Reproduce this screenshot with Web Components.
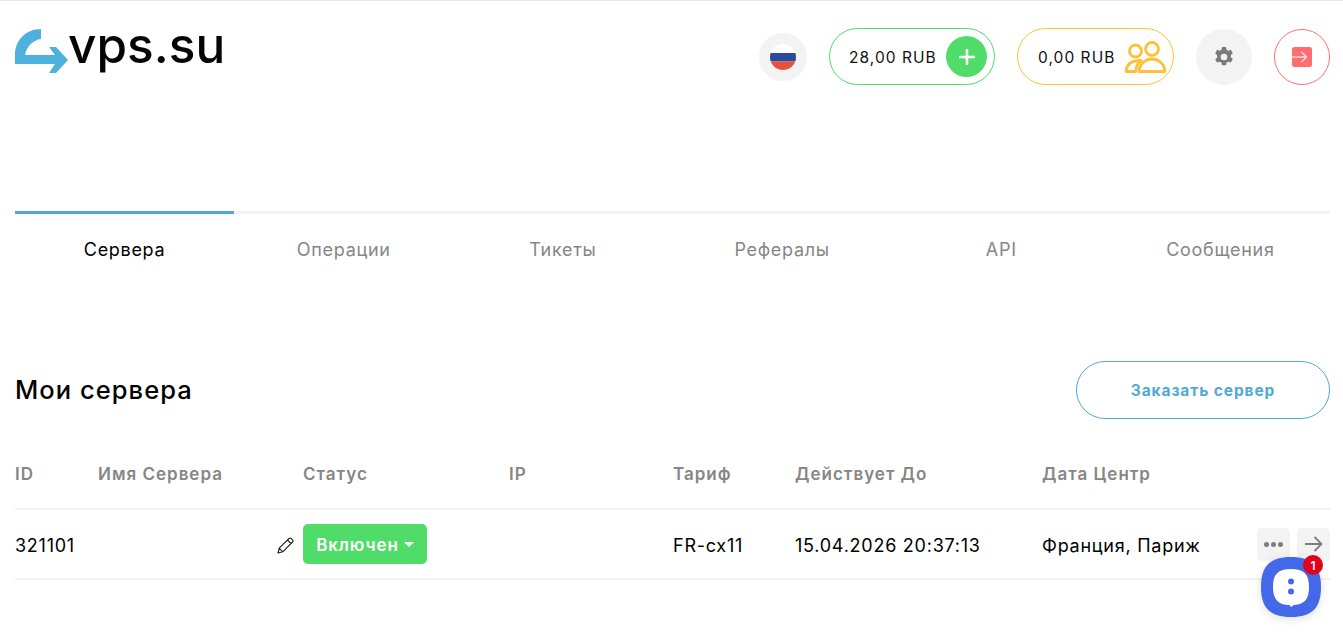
<!DOCTYPE html>
<html lang="ru">
<head>
<meta charset="utf-8">
<title>vps.su</title>
<style>
    html, body { margin: 0; padding: 0; background: #fff; }
    body { font-family: Inter, "Liberation Sans", sans-serif; color: #000; height: 637px; overflow: hidden; border-top: 1px solid #e6e6e6; box-sizing: border-box; position: relative; }
</style>
</head>
<body>
<app-header></app-header>
<app-tabs></app-tabs>
<server-list></server-list>
<chat-widget></chat-widget>

<script>
class AppHeader extends HTMLElement {
    connectedCallback() {
        this.attachShadow({ mode: 'open' });
        this.shadowRoot.innerHTML = `
            <style>
                :host { display: flex; justify-content: space-between; align-items: flex-start; padding: 0 13px 0 15px; height: 210px; box-sizing: border-box; }
                .logo { display: flex; align-items: flex-start; padding-top: 28px; height: 48px; text-decoration: none; color: #000; }
                .logo svg { width: 54px; height: 46px; flex: none; }
                .logo span { font: 500 49.500px/32px Inter, sans-serif; margin-left: -1px; letter-spacing: 0; color: #050505; }
                .right { display: flex; align-items: center; margin-top: 27px; }
                .round { width: 56px; height: 56px; border-radius: 50%; background: #f3f3f3; display: flex; align-items: center; justify-content: center; box-sizing: border-box; }
                .flag { width: 48px; height: 48px; margin-right: 22px; }
                .pill { height: 57px; border-radius: 29px; display: flex; align-items: center; box-sizing: border-box; font-size: 15.5px; letter-spacing: 1.05px; color: #111; }
                .pill span { padding-top: 2px; }
                .pill.green { width: 166px; border: 1px solid #50dc69; padding: 0 7px 0 19px; justify-content: space-between; margin-right: 22px; }
                .pill.yellow { width: 157px; border: 1px solid #fcc139; padding: 0 7px 0 20px; justify-content: space-between; margin-right: 22px; }
                .plus { width: 41px; height: 41px; border-radius: 50%; background: #50dc69; display: flex; align-items: center; justify-content: center; }
                .gear { margin-right: 22px; }
                .exit { background: #fff; border: 1px solid #ff6d70; }
            </style>
            <a class="logo" href="#">
                <svg viewBox="0 0 54 46"><path fill="#4eb0dc" d="M26 0V10C18 11 12 17 10 26H40L34 18H41L53 31 41 44H34L40 35H0V26C0 11 11 0 26 0z"/></svg>
                <span>vps.su</span>
            </a>
            <div class="right">
                <div class="round flag">
                    <svg width="26" height="26" viewBox="0 0 26 26"><clipPath id="c"><circle cx="13" cy="13" r="13"/></clipPath><g clip-path="url(#c)"><rect width="26" height="9" fill="#fff"/><rect y="9" width="26" height="8.500" fill="#2d4a9b"/><rect y="17.500" width="26" height="8.500" fill="#e8503f"/></g></svg>
                </div>
                <div class="pill green"><span>28,00 RUB</span>
                    <div class="plus"><svg width="16" height="16" viewBox="0 0 16 16"><path d="M8 1v14M1 8h14" stroke="#fff" stroke-width="2.600" stroke-linecap="round"/></svg></div>
                </div>
                <div class="pill yellow"><span>0,00 RUB</span>
                    <svg width="42" height="32" viewBox="0 0 42 32" fill="none" stroke="#fcc139" stroke-width="2.800" stroke-linejoin="round"><circle cx="11.500" cy="10" r="6"/><circle cx="28" cy="8" r="6.500"/><path d="M2 30.500C2.500 24 7 19.500 17 19.500 13.500 22 12 26 11.500 30.500z"/><path d="M15 30.500C15.500 23 21 18 28 18s12.500 5 13 12.500z"/></svg>
                </div>
                <div class="round gear">
                    <svg width="20" height="20" viewBox="0 0 24 24"><path fill="#7a7a7a" fill-rule="evenodd" d="M14.400 0l.7 3.300c.7.300 1.300.6 1.900 1.100l3.200-1 2.400 4.100-2.500 2.300c.1.800.1 1.600 0 2.400l2.500 2.300-2.400 4.100-3.200-1c-.6.500-1.200.8-1.900 1.100l-.7 3.300H9.600l-.7-3.300c-.7-.3-1.300-.6-1.900-1.100l-3.200 1L1.400 14.900l2.500-2.300c-.1-.8-.1-1.600 0-2.400L1.400 7.500l2.400-4.100 3.200 1c.6-.5 1.200-.8 1.900-1.100L9.600 0zM12 8a4 4 0 100 8 4 4 0 000-8z"/></svg>
                </div>
                <div class="round exit">
                    <svg width="20" height="20" viewBox="0 0 20 20"><rect width="20" height="20" rx="2.500" fill="#ff6d70"/><path d="M0 10h14M9.500 5l5 5-5 5" fill="none" stroke="#ffd9da" stroke-width="1.500"/></svg>
                </div>
            </div>
        `;
    }
}

class AppTabs extends HTMLElement {
    connectedCallback() {
        this.attachShadow({ mode: 'open' });
        const tabs = ['Сервера', 'Операции', 'Тикеты', 'Рефералы', 'API', 'Сообщения'];
        this.shadowRoot.innerHTML = `
            <style>
                :host { display: grid; grid-template-columns: repeat(6, 1fr); margin: 0 13px 0 15px; height: 150px; align-content: start; }
                .tab { border-top: 3px solid #f2f2f2; height: 72px; display: flex; align-items: center; justify-content: center; box-sizing: border-box; font-size: 18px; letter-spacing: .7px; color: #868686; padding-top: 2px; }
                .tab.active { border-top-color: #4fa9d6; color: #000; }
            </style>
            ${tabs.map((t, i) => `<div class="tab${i === 0 ? ' active' : ''}">${t}</div>`).join('')}
        `;
    }
}

class ServerList extends HTMLElement {
    connectedCallback() {
        this.attachShadow({ mode: 'open' });
        this.shadowRoot.innerHTML = `
            <style>
                :host { display: block; margin: 0 13px 0 15px; }
                .head { display: flex; justify-content: space-between; align-items: center; height: 58px; }
                h1 { margin: 0; font-size: 25.500px; font-weight: 500; letter-spacing: 1.05px; color: #000; position: relative; top: -1px; }
                .order { width: 254px; height: 58px; box-sizing: border-box; border: 1px solid #4fa9d6; border-radius: 29px; background: #fff; color: #4fa9d6; font: 700 15.500px Inter, sans-serif; letter-spacing: .9px; display: flex; align-items: center; justify-content: center; }
                .row { display: grid; grid-template-columns: 83px 205px 206px 164px 122px 247px 1fr 73px; align-items: center; box-sizing: border-box; border-bottom: 2px solid #f2f2f2; }
                .row.th { height: 91px; padding-top: 21px; font-size: 17px; font-weight: 600; letter-spacing: 1px; color: #868686; }
                .row.td { height: 70px; font-size: 18px; letter-spacing: .75px; color: #000; }
                .row.td > div { padding-top: 2px; }
                .status { display: flex; align-items: center; position: relative; }
                .pencil { position: absolute; left: -26px; top: 13px; width: 17px; height: 17px; }
                .btn { height: 40px; width: 124px; box-sizing: border-box; background: #50dc69; border-radius: 5px; color: #fff; font-weight: 600; font-size: 17px; letter-spacing: .9px; display: flex; align-items: center; justify-content: center; gap: 5px; padding-top: 2px; }
                .row.td .btn { margin-top: -2px; }
                .caret { width: 0; height: 0; border: 5px solid transparent; border-top-color: #fff; border-bottom: 0; margin-top: -2px; }
                .actions { display: flex; gap: 7px; justify-content: flex-end; }
                .row.td .actions { padding-top: 0; }
                .act { width: 33px; height: 33px; border-radius: 5px; background: #f3f3f3; display: flex; align-items: center; justify-content: center; }
            </style>
            <div class="head">
                <h1>Мои сервера</h1>
                <div class="order">Заказать сервер</div>
            </div>
            <div class="row th">
                <div>ID</div><div>Имя Сервера</div><div>Статус</div><div>IP</div><div>Тариф</div><div>Действует До</div><div>Дата Центр</div><div></div>
            </div>
            <div class="row td">
                <div>321101</div>
                <div></div>
                <div class="status">
                    <svg class="pencil" viewBox="0 0 17 17" fill="none" stroke="#222" stroke-width="1.100" stroke-linejoin="round"><path d="M1 16l1.200-4.800L12 1.500a1.500 1.500 0 012.100 0l1.400 1.400a1.500 1.500 0 010 2.100L5.800 14.800zM2.200 11.200l3.600 3.600M10.500 3l3.500 3.500"/></svg>
                    <div class="btn">Включен<span class="caret"></span></div>
                </div>
                <div></div>
                <div>FR-cx11</div>
                <div>15.04.2026 20:37:13</div>
                <div>Франция, Париж</div>
                <div class="actions">
                    <div class="act"><svg width="19" height="5" viewBox="0 0 19 5" fill="#7d7d7d"><circle cx="2.500" cy="2.500" r="2.500"/><circle cx="9.500" cy="2.500" r="2.500"/><circle cx="16.500" cy="2.500" r="2.500"/></svg></div>
                    <div class="act"><svg width="18" height="16" viewBox="0 0 18 16" fill="none" stroke="#7d7d7d" stroke-width="1.800"><path d="M0 8h16.500M9.500 1l7 7-7 7"/></svg></div>
                </div>
            </div>
        `;
    }
}

class ChatWidget extends HTMLElement {
    connectedCallback() {
        this.attachShadow({ mode: 'open' });
        this.shadowRoot.innerHTML = `
            <style>
                :host { position: absolute; left: 1261px; top: 556px; width: 60px; height: 60px; display: block; }
                svg { display: block; filter: drop-shadow(0 2px 4px rgba(0,0,0,.12)); }
                .badge { position: absolute; right: -2px; top: -2px; width: 20px; height: 20px; border-radius: 50%; background: #e2001a; color: #fff; font-size: 12px; font-weight: 600; display: flex; align-items: center; justify-content: center; }
            </style>
            <svg width="60" height="60" viewBox="0 0 60 60">
                <path fill="#4469e8" d="M30 0c21 0 30 9 30 30S51 60 30 60 0 51 0 30 9 0 30 0z"/>
                <path fill="#fff" d="M30 12c13 0 18 5 18 18 0 12-4 17-15 18l-3 2-1.500-2C17 48 12 42 12 30c0-13 5-18 18-18z"/>
                <circle cx="30" cy="24.500" r="3" fill="#4469e8"/>
                <circle cx="30" cy="34.500" r="3" fill="#4469e8"/>
            </svg>
            <div class="badge">1</div>
        `;
    }
}

customElements.define('app-header', AppHeader);
customElements.define('app-tabs', AppTabs);
customElements.define('server-list', ServerList);
customElements.define('chat-widget', ChatWidget);
</script>
</body>
</html>
